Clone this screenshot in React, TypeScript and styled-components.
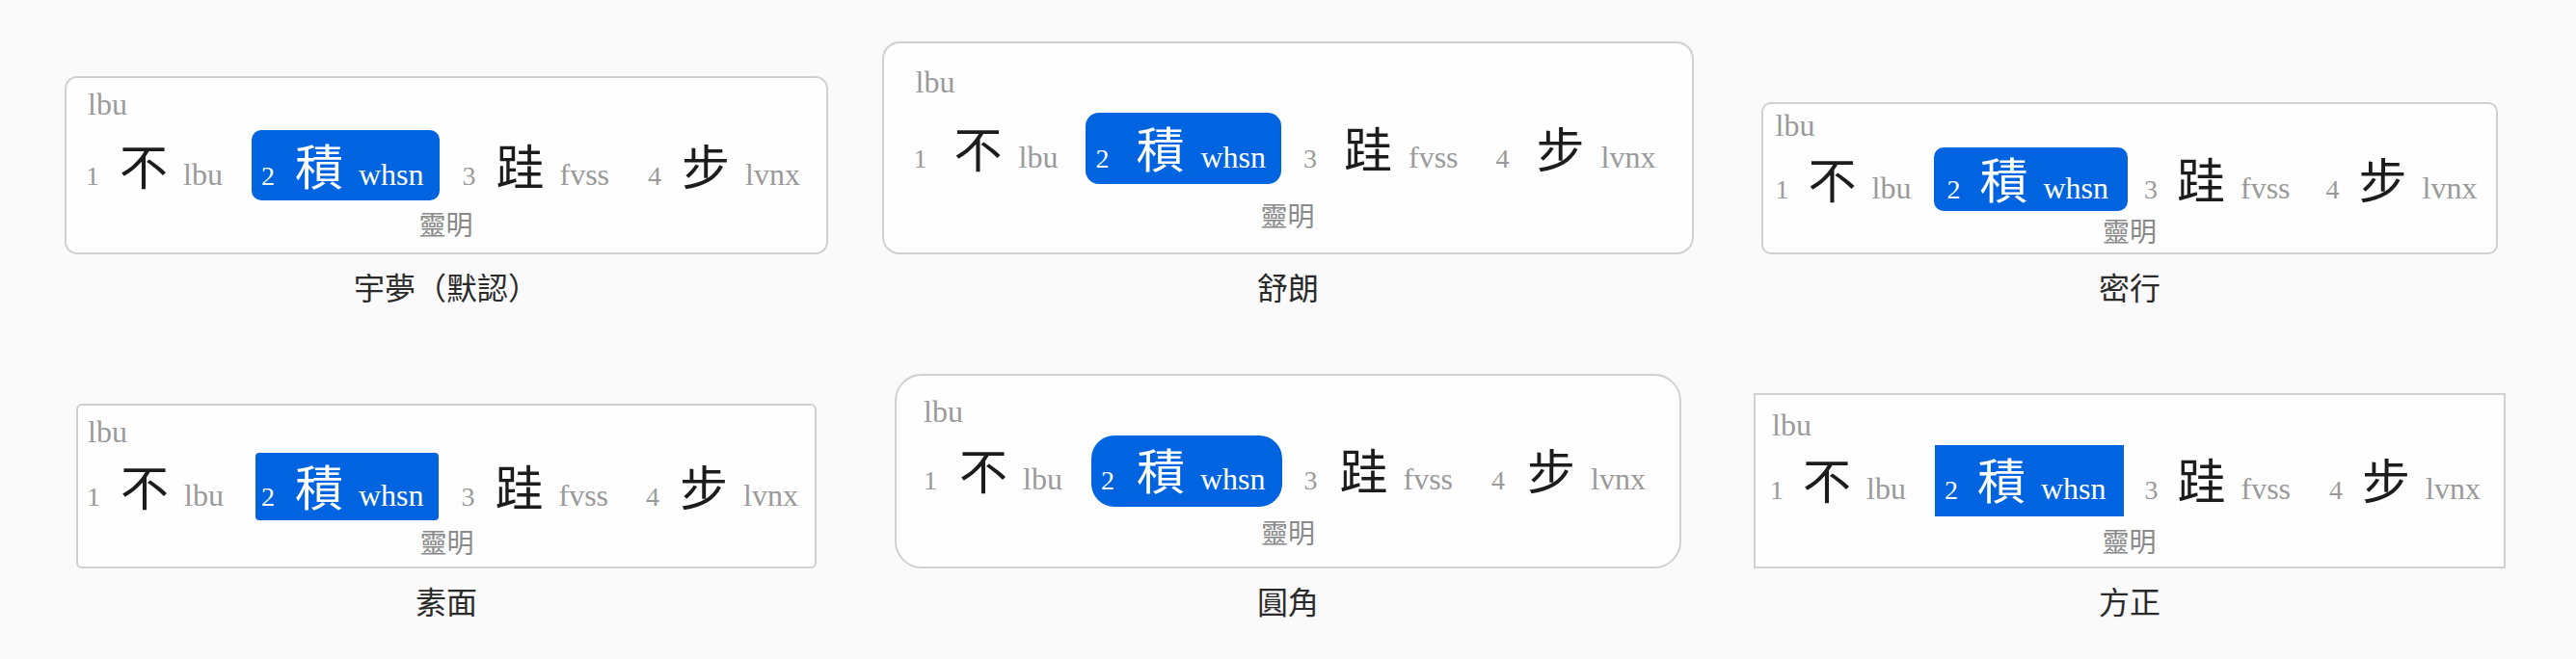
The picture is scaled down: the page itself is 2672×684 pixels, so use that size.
import * as React from "react";
import styled, { createGlobalStyle } from "styled-components";

type Layout = {
  radius: number;
  boxRadius: number;
  pad: [number, number, number, number];
  preeditIndent: number;
  preeditGap: number;
  item: [number, number, number, number];
  itemGap: number;
  indexGap: number;
  codeGap: number;
  commentGap: number;
};

// spacing for each theme preview, measured off the design
const layouts: Record<string, Layout> = {
  default: { radius: 13, boxRadius: 10, pad: [9, 11, 14, 10], preeditIndent: 12, preeditGap: 9, item: [10, 16, 9, 10], itemGap: 14, indexGap: 21, codeGap: 16, commentGap: 8 },
  comfortable: { radius: 18, boxRadius: 14, pad: [22, 22, 23, 21], preeditIndent: 12, preeditGap: 14, item: [10, 16, 10, 10], itemGap: 13, indexGap: 28, codeGap: 17, commentGap: 16 },
  compact: { radius: 10, boxRadius: 10, pad: [4, 0, 7, 0], preeditIndent: 13, preeditGap: 5, item: [6, 20, 6, 13], itemGap: 4, indexGap: 20, codeGap: 16, commentGap: 4 },
  flat: { radius: 6, boxRadius: 4, pad: [9, 2, 10, 3], preeditIndent: 7, preeditGap: 4, item: [8, 15, 8, 6], itemGap: 18, indexGap: 21, codeGap: 16, commentGap: 6 },
  rounded: { radius: 28, boxRadius: 24, pad: [19, 18, 20, 18], preeditIndent: 10, preeditGap: 7, item: [9, 17, 11, 10], itemGap: 13, indexGap: 23, codeGap: 16, commentGap: 10 },
  square: { radius: 0, boxRadius: 0, pad: [13, 6, 11, 5], preeditIndent: 12, preeditGap: 3, item: [9, 18, 11, 10], itemGap: 12, indexGap: 20, codeGap: 16, commentGap: 9 },
};

const px = (v: number[]) => v.map((n) => `${n}px`).join(" ");

const GlobalStyle = createGlobalStyle`
  html, body {
    margin: 0;
    padding: 0;
    background: #fafafa;
    font-family: "Liberation Serif", "Noto Sans CJK TC", serif;
  }
`;

const Page = styled.div`
  display: grid;
  grid-template-columns: repeat(3, 840px);
  column-gap: 33px;
  row-gap: 69px;
  align-items: end;
  padding: 43px 43px 0;
`;

const Cell = styled.div`
  display: flex;
  flex-direction: column;
  align-items: center;
`;

const Card = styled.div<{ $l: Layout }>`
  display: flex;
  flex-direction: column;
  background: #fefefe;
  border: 2px solid #d0d0d0;
  border-radius: ${(p) => p.$l.radius}px;
  padding: ${(p) => px(p.$l.pad)};
`;

const Preedit = styled.div<{ $l: Layout }>`
  font-size: 32px;
  line-height: 36px;
  color: #9a9a9a;
  padding-left: ${(p) => p.$l.preeditIndent}px;
  margin-bottom: ${(p) => p.$l.preeditGap}px;
`;

const Row = styled.div<{ $l: Layout }>`
  display: flex;
  gap: ${(p) => p.$l.itemGap}px;
`;

const Item = styled.div<{ $l: Layout; $on?: boolean }>`
  display: flex;
  align-items: baseline;
  padding: ${(p) => px(p.$l.item)};
  border-radius: ${(p) => p.$l.boxRadius}px;
  background: ${(p) => (p.$on ? "#0064e0" : "transparent")};
  color: ${(p) => (p.$on ? "#ffffff" : "#9a9a9a")};
`;

const Index = styled.span<{ $l: Layout }>`
  font-size: 28px;
  line-height: 32px;
  margin-right: ${(p) => p.$l.indexGap}px;
`;

const Char = styled.span<{ $on?: boolean }>`
  font-family: "Noto Sans CJK TC", sans-serif;
  font-size: 50px;
  line-height: 50px;
  color: ${(p) => (p.$on ? "#ffffff" : "#1c1c1c")};
`;

const Code = styled.span<{ $l: Layout }>`
  font-size: 32px;
  line-height: 36px;
  margin-left: ${(p) => p.$l.codeGap}px;
`;

const Comment = styled.div<{ $l: Layout }>`
  font-family: "Noto Sans CJK TC", sans-serif;
  font-size: 28px;
  line-height: 32px;
  color: #8a8a8a;
  text-align: center;
  margin-top: ${(p) => p.$l.commentGap}px;
`;

const Caption = styled.div`
  font-family: "Noto Sans CJK TC", sans-serif;
  font-size: 32px;
  line-height: 44px;
  color: #2a2a2a;
  margin-top: 11px;
`;

const candidates = [
  { ch: "不", code: "lbu" },
  { ch: "積", code: "whsn" },
  { ch: "跬", code: "fvss" },
  { ch: "步", code: "lvnx" },
];

const themes = [
  { key: "default", name: "宇夢（默認）" },
  { key: "comfortable", name: "舒朗" },
  { key: "compact", name: "密行" },
  { key: "flat", name: "素面" },
  { key: "rounded", name: "圓角" },
  { key: "square", name: "方正" },
];

const Panel = ({ l }: { l: Layout }) => (
  <Card $l={l}>
    <Preedit $l={l}>lbu</Preedit>
    <Row $l={l}>
      {candidates.map((c, i) => {
        const on = i === 1;
        return (
          <Item key={c.ch} $l={l} $on={on}>
            <Index $l={l}>{i + 1}</Index>
            <Char $on={on}>{c.ch}</Char>
            <Code $l={l}>{c.code}</Code>
          </Item>
        );
      })}
    </Row>
    <Comment $l={l}>靈明</Comment>
  </Card>
);

export default function App() {
  return (
    <>
      <GlobalStyle />
      <Page>
        {themes.map((t) => (
          <Cell key={t.key}>
            <Panel l={layouts[t.key]} />
            <Caption>{t.name}</Caption>
          </Cell>
        ))}
      </Page>
    </>
  );
}
